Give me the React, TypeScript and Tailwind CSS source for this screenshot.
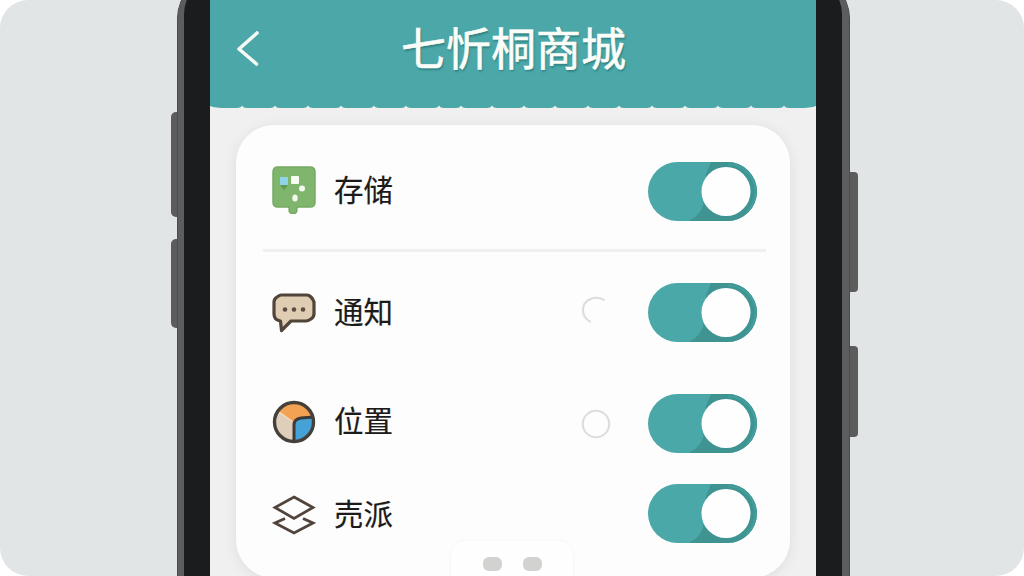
import type { ReactNode } from "react";

interface Setting {
  id: string;
  label: string;
  icon: ReactNode;
  rowClass: string;
  labelClass: string;
  status?: "loading" | "idle";
}

function StorageIcon() {
  return (
    <svg className="-mt-[4px]" width="44" height="48" viewBox="0 0 44 48">
      <path
        d="M6 1h32q5 0 5 5v30q0 5-5 5H26q-2 1-1 3a4 4 0 1 1-8 0q1-2-1-3H6q-5 0-5-5V6q0-5 5-5z"
        fill="#80b56d"
        stroke="#74aa62"
        strokeWidth="1.5"
      />
      <path d="M8 19h8l-4 5z" fill="#5f9a50" />
      <rect x="8" y="11" width="8" height="8" fill="#90d3e6" />
      <rect x="19" y="10" width="8" height="8" rx="1" fill="#f8fbf3" />
      <circle cx="30" cy="22.5" r="3" fill="#f4f8ee" />
      <ellipse cx="23" cy="32" rx="2.7" ry="3.5" fill="#f4f8ee" />
    </svg>
  );
}

function MessageIcon() {
  return (
    <svg width="44" height="40" viewBox="0 0 44 40">
      <path
        d="M9 2h26q2 0 4 2t3 5v12q0 3-3 5t-5 2H19L9.5 37.5 8.5 28Q2 27 2 21V9q0-3 3-5t4-2z"
        fill="#e0cbb3"
        stroke="#50443b"
        strokeWidth="3.2"
        strokeLinejoin="round"
      />
      <g fill="#5d4e43">
        <circle cx="13" cy="16.5" r="2.3" />
        <circle cx="22" cy="16.5" r="2.3" />
        <circle cx="31" cy="16.5" r="2.3" />
      </g>
    </svg>
  );
}

function LocationIcon() {
  return (
    <svg className="-mt-[3px]" width="44" height="44" viewBox="0 0 44 44">
      <circle cx="22" cy="22" r="20" fill="#dfceba" />
      <path d="M6 11A20 20 0 0 1 41 16L29 18l-8 5z" fill="#f3a253" />
      <path d="M22 41V25q0-6 7-7l12-1A20 20 0 0 1 22 42z" fill="#46a2d6" />
      <path d="M7 12l14 10" stroke="#f3dfc5" strokeWidth="1.5" />
      <path d="M22 42V25q0-6 7-7l13-1" fill="none" stroke="#3d3a38" strokeWidth="3" />
      <circle cx="22" cy="22" r="19.5" fill="none" stroke="#46403b" strokeWidth="3.4" />
    </svg>
  );
}

function LayersIcon() {
  return (
    <svg className="mt-[2px]" width="44" height="42" viewBox="0 0 44 42" fill="none" stroke="#51443c" strokeWidth="2.8">
      <path d="M22 3l19 10.5-19 11L3 13.5z" />
      <path d="M13 24.5L3 29l19 10 19-10-10-4.5" />
    </svg>
  );
}

function Toggle() {
  return (
    <div className="flex h-[59px] w-[109px] shrink-0 overflow-hidden rounded-full bg-[#4ba8a8]">
      <svg width="109" height="59" viewBox="0 0 109 59">
        <path d="M63 0H109V59H41Q51 54 55 44L58 12z" fill="#3f9492" />
        <path d="M80 2.5A27 27 0 0 1 98 50" fill="none" stroke="#439f9b" strokeWidth="2" />
        <circle cx="78" cy="29.5" r="24.5" fill="#fefefe" />
      </svg>
    </div>
  );
}

function Status({ status }: { status?: Setting["status"] }) {
  return (
    <svg
      className="mr-[37px] overflow-visible"
      width="30"
      height="30"
      viewBox="0 0 30 30"
      fill="none"
      stroke="#dcdcdc"
      strokeWidth="2"
    >
      {status === "idle" && <circle cx="15" cy="15" r="13.2" />}
      {status === "loading" && <path d="M23 2C15 -3 2 1 2 12Q2 20 9 23.5" strokeLinecap="round" />}
    </svg>
  );
}

const settings: Setting[] = [
  {
    id: "storage",
    label: "存储",
    icon: <StorageIcon />,
    rowClass: "h-[127px] pt-[9px] border-b-[3px] border-[#f0f0f0]",
    labelClass: "-mt-[7px]",
  },
  { id: "notice", label: "通知", icon: <MessageIcon />, rowClass: "h-[121px]", labelClass: "-mt-[5px]", status: "loading" },
  { id: "location", label: "位置", icon: <LocationIcon />, rowClass: "h-[101px]", labelClass: "-mt-[9px]", status: "idle" },
  { id: "more", label: "売派", icon: <LayersIcon />, rowClass: "h-[79px]", labelClass: "-mt-[3px]" },
];

// x of every gap between the scallops on the header's lower edge
const notches = [32, 65, 98, 131, 164, 196, 229, 251, 282, 314, 345, 378, 409, 442, 475, 508, 541, 574];

export default function App() {
  return (
    <div className="h-[576px] w-[1024px] overflow-hidden bg-white font-['Noto_Sans_CJK_SC',sans-serif]">
      <div className="flex h-full overflow-hidden rounded-[28px] bg-[#e2e5e6] pl-[171px]">
        <div className="flex w-[6px] shrink-0 flex-col pt-[112px]">
          <div className="h-[105px] w-[12px] rounded-l-[5px] bg-[#5c5c5d]" />
          <div className="mt-[22px] h-[89px] w-[12px] rounded-l-[5px] bg-[#5c5c5d]" />
        </div>

        <div className="z-10 -mt-[22px] h-[640px] w-[673px] shrink-0 rounded-[40px] border-x border-[#4b4c4d] bg-[#5c5d5e] pl-[6px] pr-[7px]">
          <div className="h-full rounded-[36px] bg-[#1b1c1d] px-[26px] pt-[22px]">
            <div className="flex h-[618px] flex-col bg-[#f0f0f1]">
              <header className="grid h-[104px] shrink-0 grid-cols-[60px_1fr_60px] items-center bg-[#4ba7a8] text-[#fbfdf9]">
                <svg
                  className="-mt-[9px] ml-[24px]"
                  width="28"
                  height="40"
                  viewBox="0 0 28 40"
                  fill="none"
                  stroke="#f6faf6"
                  strokeWidth="3.6"
                  strokeLinecap="round"
                  strokeLinejoin="round"
                >
                  <path d="M23 5L5 21l17.5 15" />
                </svg>
                <h1 className="-mt-[11px] pl-px text-center text-[45px] leading-[60px] [-webkit-text-stroke:0.6px_#fbfdf9] [text-shadow:1px_2px_2px_#2f8080]">
                  七忻桐商城
                </h1>
              </header>
              <svg className="shrink-0" width="606" height="5" viewBox="0 0 606 5">
                <path d="M0 0H606V2Q600 4 590 4H17Q5 4 0 2z" fill="#4ba7a8" />
                {notches.map((x) => (
                  <path key={x} d={`M${x - 5} 4q4 0 5-2.5q1 2.5 5 2.5z`} fill="#f8fafa" />
                ))}
              </svg>

              <main className="mx-[26px] mt-[16px] h-[453px] shrink-0 overflow-hidden rounded-[38px] bg-[#fdfdfd] pr-[24px] pl-[27px] shadow-[0_2px_14px_rgba(0,0,0,0.08)]">
                {settings.map((setting) => (
                  <div key={setting.id} className={`flex items-center pr-[9px] ${setting.rowClass}`}>
                    <div className="w-[71px] pl-[9px]">{setting.icon}</div>
                    <span
                      className={`flex-1 text-[29.5px] leading-[44px] text-[#1c1b1a] [-webkit-text-stroke:0.2px_#1c1b1a] ${setting.labelClass}`}
                    >
                      {setting.label}
                    </span>
                    <Status status={setting.status} />
                    <Toggle />
                  </div>
                ))}
                <div className="-mt-[12px] ml-[188px] flex h-[44px] w-[122px] gap-[21px] rounded-t-[14px] bg-[#fefefe] pt-[16px] pl-[32px] shadow-[0_0_4px_rgba(0,0,0,0.04)]">
                  <div className="h-[14px] w-[19px] rounded-[6px] bg-[#d2d2d1]" />
                  <div className="h-[14px] w-[19px] rounded-[6px] bg-[#d2d2d1]" />
                </div>
              </main>
            </div>
          </div>
        </div>

        <div className="flex w-[8px] shrink-0 flex-col pt-[172px]">
          <div className="h-[120px] rounded-r-[4px] bg-[#5c5c5d]" />
          <div className="mt-[54px] h-[91px] rounded-r-[4px] bg-[#5c5c5d]" />
        </div>
      </div>
    </div>
  );
}
